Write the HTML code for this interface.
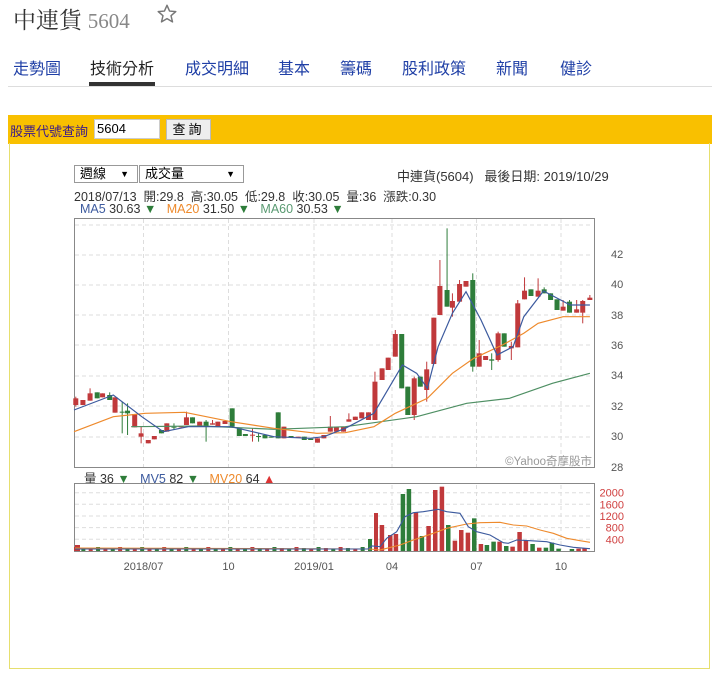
<!DOCTYPE html>
<html><head><meta charset="utf-8">
<style>
body{margin:0;width:720px;height:676px;background:#fff;font-family:"Liberation Sans","Noto Sans CJK TC",sans-serif;position:relative;overflow:hidden}
.a{position:absolute;white-space:nowrap}
.title{left:13px;top:2px;font-size:23px;color:#333;font-family:"Liberation Serif","Noto Serif CJK SC",serif}
.title span{color:#888;font-size:21px}
.tab{top:55px;font-size:16px;color:#1f3fa6}
.sel{position:absolute;top:165px;height:16px;border:1px solid #999;background:#fff;font-size:13px;line-height:16px;padding-left:5px;box-sizing:content-box}
.sel b{position:absolute;right:8px;top:0;font-size:9px}
</style></head><body>
<div class="a title">中連貨 <span>5604</span></div>
<svg class="a" style="left:156px;top:3px" width="22" height="22" viewBox="0 0 24 24"><path d="M12 2.5l2.8 6.3 6.8.6-5.2 4.5 1.6 6.7L12 17.1l-6 3.5 1.6-6.7-5.2-4.5 6.8-.6z" fill="none" stroke="#777" stroke-width="1.6" stroke-linejoin="round"/></svg>
<div class="a tab" style="left:13px">走勢圖</div>
<div class="a tab" style="left:90px;color:#222">技術分析</div>
<div class="a" style="left:89px;top:82px;width:66px;height:4px;background:#333"></div>
<div class="a tab" style="left:185px">成交明細</div>
<div class="a tab" style="left:278px">基本</div>
<div class="a tab" style="left:340px">籌碼</div>
<div class="a tab" style="left:402px">股利政策</div>
<div class="a tab" style="left:496px">新聞</div>
<div class="a tab" style="left:560px">健診</div>
<div class="a" style="left:8px;top:86px;width:704px;height:1px;background:#ddd"></div>

<div class="a" style="left:8px;top:115px;width:704px;height:29px;background:#f9c000"></div>
<div class="a" style="left:9px;top:143px;width:699px;height:525px;border:1px solid #e6df6e;border-top:none"></div>
<div class="a" style="left:10px;top:121px;font-size:13px;color:#3a1a8a">股票代號查詢</div>
<div class="a" style="left:94px;top:119px;width:66px;height:20px;background:#fff;border:1px solid #ccc;box-sizing:border-box;font-size:13px;line-height:18px;padding-left:2px">5604</div>
<div class="a" style="left:166px;top:119px;width:45px;height:21px;background:#eee;border:1px solid #bbb;box-sizing:border-box;font-size:13px;line-height:19px;text-align:center;letter-spacing:3px">查詢</div>

<div class="sel" style="left:74px;width:57px">週線<b>▼</b></div>
<div class="sel" style="left:139px;width:98px">成交量<b>▼</b></div>
<div class="a" style="left:397px;top:166px;font-size:13px;color:#333">中連貨(5604)&nbsp;&nbsp; 最後日期: 2019/10/29</div>
<div class="a" style="left:74px;top:186px;font-size:12.5px;color:#333">2018/07/13&nbsp; 開:29.8&nbsp; 高:30.05&nbsp; 低:29.8&nbsp; 收:30.05&nbsp; 量:36&nbsp; 漲跌:0.30</div>
<div class="a" style="left:80px;top:202px;font-size:12.5px;color:#333"><span style="color:#3c5a9e">MA5</span> 30.63 <span style="color:#2e7d3a">▼</span>&nbsp;&nbsp; <span style="color:#ee8a2c">MA20</span> 31.50 <span style="color:#2e7d3a">▼</span>&nbsp;&nbsp; <span style="color:#5a9a72">MA60</span> 30.53 <span style="color:#2e7d3a">▼</span></div>
<div class="a" style="left:84px;top:468px;font-size:12.5px;color:#333">量 36 <span style="color:#2e7d3a">▼</span>&nbsp;&nbsp; <span style="color:#3c5a9e">MV5</span> 82 <span style="color:#2e7d3a">▼</span>&nbsp;&nbsp; <span style="color:#ee8a2c">MV20</span> 64 <span style="color:#d33">▲</span></div>

<svg id="c" class="a" style="left:0;top:0" width="720" height="676"></svg>
<script>
var s='';
function R(x,y,w,h,f){s+='<rect x="'+x+'" y="'+y+'" width="'+w+'" height="'+h+'" fill="'+f+'"/>';}
function L(x1,y1,x2,y2,c,d){s+='<line x1="'+x1+'" y1="'+y1+'" x2="'+x2+'" y2="'+y2+'" stroke="'+c+'" stroke-width="1"'+(d?' stroke-dasharray="4,3"':'')+'/>';}
var gx=[143.5,228.5,314,392,476.5,561];
// price grid
var gy=[225,255,285,315,345,376,406,437];
gy.forEach(function(y){L(75,y,593,y,'#ddd',1)});
gx.forEach(function(x){L(x,219,x,467,'#ddd',1);L(x,485,x,550,'#ddd',1)});
[492.7,504.3,516,527.6,539.3].forEach(function(y){L(75,y,593,y,'#ddd',1)});
s+='<rect x="74.5" y="218.5" width="520" height="249" fill="none" stroke="#888"/>';
s+='<rect x="74.5" y="483.5" width="520" height="68" fill="none" stroke="#888"/>';
// y labels
[[42,254],[40,284],[38,315],[36,345],[34,375],[32,406],[30,436],[28,467]].forEach(function(a){s+='<text x="611" y="'+(a[1]+4)+'" font-size="11" fill="#555">'+a[0]+'</text>'});
[[2000,492.7],[1600,504.3],[1200,516],[800,527.6],[400,539.3]].forEach(function(a){s+='<text x="624" y="'+(a[1]+4)+'" font-size="11" fill="#d04040" text-anchor="end">'+a[0]+'</text>'});
[['2018/07',143.5],['10',228.5],['2019/01',314],['04',392],['07',476.5],['10',561]].forEach(function(a){s+='<text x="'+a[1]+'" y="570" font-size="11" fill="#555" text-anchor="middle">'+a[0]+'</text>'});
s+='<text x="592" y="465" font-size="11.5" fill="#999" text-anchor="end">©Yahoo奇摩股市</text>';
// candles [zx, top, bottom, color(r/g), wickTop, wickBot]
var C=[[45,715,735,'r',710,740],[65,720,735,'r'],[85,700,722,'r',685],[105,697,715,'g'],[120,700,712,'r'],[140,705,720,'g',697],[155,712,758,'r'],[175,755,758,'g',725,820],[190,752,760,'g',730,825],[210,762,802,'r'],[228,820,830,'r',800,850],[248,840,850,'r'],[265,828,838,'r'],[285,810,820,'g'],[300,790,815,'r'],[320,800,803,'g',790,810],[340,798,802,'r'],[355,772,795,'r',755],[372,772,790,'g'],[392,785,800,'r'],[410,785,800,'g',780,845],[428,790,794,'r',780],[443,785,800,'r'],[463,783,792,'r'],[483,745,800,'g'],[503,805,828,'g'],[520,822,828,'g'],[540,824,827,'r',805,845],[557,828,831,'g',820,845],[575,825,835,'g'],[592,830,833,'g'],[612,757,835,'g'],[628,800,835,'r'],[648,828,831,'g'],[668,830,833,'r'],[685,830,840,'g'],[703,836,840,'g'],[722,835,848,'r'],[740,825,835,'r'],[758,800,815,'r',768],[775,800,815,'r'],[795,800,815,'r'],[810,778,785,'r',760],[828,770,780,'r'],[846,757,775,'r'],[865,757,780,'r'],[883,665,780,'r',635],[903,625,660,'r'],[920,593,630,'r'],[940,522,590,'r',510],[958,522,685,'g'],[975,680,765,'g'],[993,655,765,'r',650,780],[1010,650,680,'g'],[1028,628,690,'r',605,725],[1048,473,612,'r'],[1065,378,465,'r',300],[1085,390,440,'g',205],[1100,423,443,'r',400,470],[1120,372,425,'r',360],[1138,363,380,'r'],[1157,360,620,'g',340,635],[1175,580,620,'r',540],[1193,588,600,'r'],[1210,598,602,'g',580,630],[1228,520,600,'r',515,605],[1245,520,560,'g'],[1265,558,565,'r',545,600],[1283,430,562,'r',420],[1302,392,418,'r',352],[1320,388,408,'g'],[1340,392,410,'r',355],[1357,388,400,'g',382],[1375,400,420,'g'],[1393,418,450,'g'],[1410,440,452,'r',420],[1428,425,458,'g',420],[1448,448,458,'r',420],[1465,423,458,'r',420,490],[1485,413,420,'r',405]];
function X(zx){return 74+(zx-40)*0.357;}
function Y(zy){return zy/3+160;}
C.forEach(function(c){var x=X(c[0]),col=c[3]=='r'?'#c0393b':'#2e7d3a';var t=Y(c[1]),b=Y(c[2]);var wt=Y(c[4]||c[1]),wb=Y(c[5]||c[2]);L(x,wt,x,wb,col);var h=Math.max(1,b-t);R(x-2.5,t,5,h,col);});
function P(pts,col){s+='<polyline fill="none" stroke="'+col+'" stroke-width="1.2" points="'+pts.map(function(p){return X(p[0]).toFixed(1)+','+Y(p[1]).toFixed(1)}).join(' ')+'"/>';}
P([[200,800],[400,798],[600,808],[800,800],[1000,770],[1140,730],[1260,715],[1380,670],[1485,640]],'#4e8f63');
P([[40,815],[150,770],[240,760],[350,757],[480,785],[600,805],[720,820],[800,818],[880,800],[940,760],[1030,715],[1100,640],[1160,595],[1240,555],[1300,520],[1340,490],[1410,470],[1485,470]],'#ee8a2c');
P([[40,750],[150,705],[230,770],[290,815],[360,800],[480,800],[600,830],[700,835],[740,830],[800,805],[880,760],[960,615],[1000,640],[1030,685],[1060,560],[1100,460],[1138,395],[1180,480],[1225,585],[1270,560],[1300,470],[1355,393],[1430,435],[1485,435]],'#3c5a9e');
// volume
for(var i=0;i<40;i++){var x=76+i*7.35;R(x-2,547+(i%3),4,4-(i%3),i%2?'#2e7d3a':'#c0393b');}
R(75,545,5,6,'#c0393b');
R(368,539,4,12,'#2e7d3a');R(374,513,4,38,'#c0393b');
var V=[[5,165,'r'],[30,195,'r'],[47,192,'r'],[68,72,'g'],[86,57,'g'],[107,127,'r'],[125,198,'g'],[145,168,'r'],[165,60,'r'],[185,50,'r'],[204,165,'g'],[224,212,'r'],[243,180,'r'],[263,188,'r'],[282,145,'g'],[302,222,'r'],[320,225,'g'],[340,215,'g'],[358,215,'r'],[378,228,'g'],[397,230,'r'],[418,186,'r'],[437,210,'r'],[457,222,'g'],[477,233,'r'],[497,233,'g'],[515,218,'g'],[535,236,'g'],[575,237,'g'],[595,236,'r'],[613,235,'r']];
V.forEach(function(v){var x=v[0]/3+380,t=v[1]/3+470;R(x-2,t,4.5,551-t,v[2]=='r'?'#c0393b':'#2e7d3a');});
function Q(pts,col,pre){s+='<polyline fill="none" stroke="'+col+'" stroke-width="1.1" points="'+pre+' '+pts.map(function(p){return (p[0]/3+380).toFixed(1)+','+(p[1]/3+470).toFixed(1)}).join(' ')+'"/>';}
Q([[0,240],[60,225],[100,210],[160,190],[200,175],[260,162],[300,158],[360,157],[400,165],[440,168],[480,180],[520,190],[560,205],[600,212],[630,217]],'#ee8a2c','75,548 370,549');
Q([[0,230],[20,205],[50,185],[75,140],[100,128],[130,125],[175,118],[200,125],[240,130],[265,170],[290,185],[330,195],[370,218],[385,220],[410,210],[450,212],[500,215],[540,225],[580,232],[630,236]],'#3c5a9e','75,549 368,549 372,546');
document.getElementById('c').innerHTML=s;
</script>
</body></html>
